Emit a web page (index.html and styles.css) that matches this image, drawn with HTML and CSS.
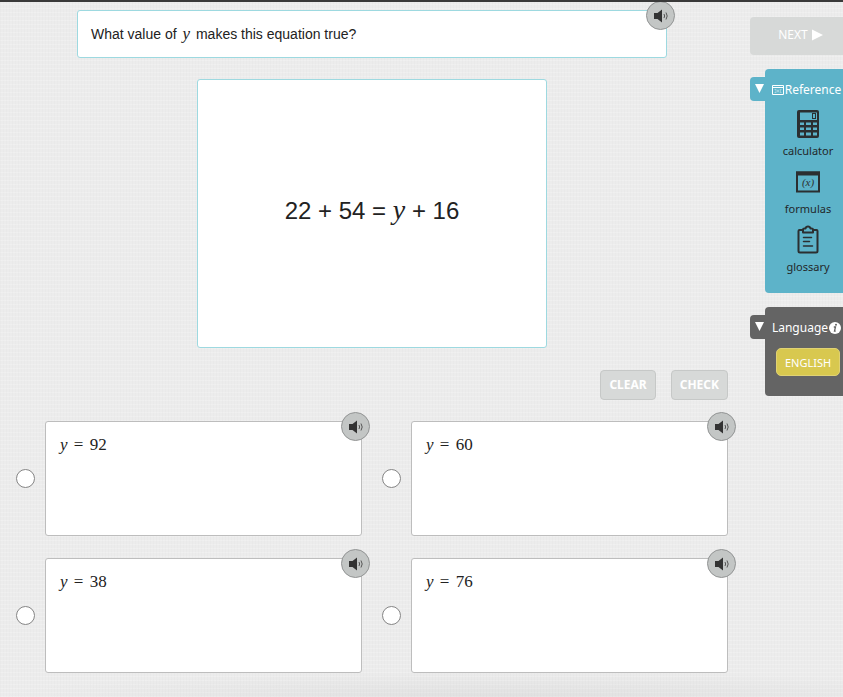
FILE: index.html
```html
<!DOCTYPE html>
<html lang="en">
<head>
  <meta charset="UTF-8" />
  <meta name="viewport" content="width=device-width, initial-scale=1.0" />
  <title>Equations</title>
  <link rel="stylesheet" href="styles.css">
</head>
<body>

  <!-- shared speaker icon -->
  <svg class="defs" aria-hidden="true">
    <symbol id="speaker" viewBox="0 0 16 14">
      <path d="M1 4h3.500L9 .5v13L4.500 10H1z" fill="#333"/>
      <path d="M11 5q1.300 2 0 4M13 3.500q2.400 3.500 0 7" fill="none" stroke="#555" stroke-width="1"/>
    </symbol>
  </svg>

  <div class="page">
    <main class="main">
      <div class="question">
        What value of <i class="var">y</i> makes this equation true?
        <button class="speaker" aria-label="Listen"><svg><use href="#speaker"/></svg></button>
      </div>

      <div class="figure">
        <p class="equation">22 + 54 = <i class="var">y</i> + 16</p>
      </div>

      <div class="actions">
        <button class="action">CLEAR</button>
        <button class="action">CHECK</button>
      </div>

      <form class="choices">
        <div class="choice">
          <input type="radio" name="answer" id="a1" />
          <div class="card">
            <label for="a1"><i>y</i> <span class="eq">=</span> 92</label>
            <button type="button" class="speaker" aria-label="Listen"><svg><use href="#speaker"/></svg></button>
          </div>
        </div>
        <div class="choice">
          <input type="radio" name="answer" id="a2" />
          <div class="card">
            <label for="a2"><i>y</i> <span class="eq">=</span> 60</label>
            <button type="button" class="speaker" aria-label="Listen"><svg><use href="#speaker"/></svg></button>
          </div>
        </div>
        <div class="choice">
          <input type="radio" name="answer" id="a3" />
          <div class="card">
            <label for="a3"><i>y</i> <span class="eq">=</span> 38</label>
            <button type="button" class="speaker" aria-label="Listen"><svg><use href="#speaker"/></svg></button>
          </div>
        </div>
        <div class="choice">
          <input type="radio" name="answer" id="a4" />
          <div class="card">
            <label for="a4"><i>y</i> <span class="eq">=</span> 76</label>
            <button type="button" class="speaker" aria-label="Listen"><svg><use href="#speaker"/></svg></button>
          </div>
        </div>
      </form>
    </main>

    <aside class="sidebar">
      <button class="next">NEXT
        <svg width="11" height="12" viewBox="0 0 11 12"><path d="M0 0.500l11 5.500-11 5.500z" fill="#fff"/></svg>
      </button>

      <section class="panel reference">
        <button class="tab" aria-label="Collapse reference">
          <svg width="9" height="10" viewBox="0 0 9 10"><path d="M0 0h9L4.500 9z" fill="#fff"/></svg>
        </button>
        <h2>
          <svg width="12" height="10" viewBox="0 0 12 10"><path d="M.5.5h11v9H.5zM.5 2.500h11" fill="none" stroke="#fff"/><path d="M2.500 4.500h1.500v3H2.500M5 4.500l2 3M7 4.500l-2 3M9.500 4.500H8.300v3h1.200" fill="none" stroke="#cdeaf0" stroke-width=".6"/></svg>Reference
        </h2>
        <a href="#" class="tool">
          <svg width="24" height="30" viewBox="0 0 24 30">
            <rect x="1" y="1" width="22" height="28" rx="2" fill="#2b2f31"/>
            <path d="M4 3.500h17v7.500H4z" fill="#5db3c9"/>
            <rect x="16.500" y="4.500" width="3" height="5" fill="none" stroke="#2b2f31"/>
            <path d="M4 13.500h4v2.500H4zM10 13.500h5v2.500h-5zM17 13.500h4v2.500h-4zM4 18.500h4v2.500H4zM10 18.500h5v2.500h-5zM17 18.500h4v2.500h-4zM4 23.500h4v3H4zM10 23.500h5v3h-5zM17 23.500h4v3h-4z" fill="#5db3c9"/>
          </svg>
          calculator
        </a>
        <a href="#" class="tool">
          <svg width="24" height="30" viewBox="0 0 24 30">
            <path d="M1 5.500h22v19H1z" fill="none" stroke="#2b2f31" stroke-width="2"/>
            <path d="M0 4.500h24v4H0z" fill="#2b2f31"/>
            <text x="12" y="19" text-anchor="middle" class="fx">(x)</text>
          </svg>
          formulas
        </a>
        <a href="#" class="tool">
          <svg width="24" height="30" viewBox="0 0 24 30" fill="none" stroke="#2b2f31" stroke-width="2" stroke-linecap="round" stroke-linejoin="round">
            <path d="M7 5H3.500Q2.500 5 2.500 6v20q0 1.500 1.500 1.500h16q1.500 0 1.500-1.500V6q0-1-1-1H17"/>
            <path d="M7 7.500V4.500Q7 3.500 8.500 3.500h1Q10 1.500 12 1.500t2.500 2h1q1.500 0 1.500 1v3z"/>
            <path d="M7.500 12.500h8M7.500 16.500h6M7.500 21h9" stroke-width="1.500"/>
          </svg>
          glossary
        </a>
      </section>

      <section class="panel language">
        <button class="tab" aria-label="Collapse language">
          <svg width="9" height="10" viewBox="0 0 9 10"><path d="M0 0h9L4.500 9z" fill="#fff"/></svg>
        </button>
        <h2>Language
          <svg width="12" height="12" viewBox="0 0 12 12"><circle cx="6" cy="6" r="6" fill="#fff"/><circle cx="7" cy="2.800" r="1" fill="#646464"/><path d="M4.800 5h1.700L5.500 9.200h1.200" fill="none" stroke="#646464" stroke-width="1.300"/></svg>
        </h2>
        <button class="lang">ENGLISH</button>
      </section>
    </aside>
  </div>

</body>
</html>
```

FILE: styles.css
```css
* {
  box-sizing: border-box;
}
body {
  margin: 0;
  min-height: 100vh;
  border-top: 2px solid #3a3a3a;
  font-family: "Liberation Sans", Arial, sans-serif;
  color: #222;
  background:
    radial-gradient(ellipse 520px 26px at 60% 100%, rgba(0,0,0,0.05), transparent),
    repeating-linear-gradient(90deg, rgba(0,0,0,0.012) 0 1px, transparent 1px 3px),
    repeating-linear-gradient(0deg, rgba(255,255,255,0.2) 0 1px, transparent 1px 4px),
    #ececec;
  overflow-x: hidden;
}
button {
  font-family: "Noto Sans", sans-serif;
  padding: 0;
  cursor: pointer;
}
.defs {
  position: absolute;
  width: 0;
  height: 0;
}
.page {
  display: flex;
}
.main {
  flex: 1;
  min-width: 0;
  padding: 8px 22px 24px 16px;
}

/* question + figure */
.question {
  position: relative;
  margin: 0 61px 21px;
  padding: 12px 13px;
  border: 1px solid #9dd9e0;
  border-radius: 3px;
  background: #fff;
  font-size: 14px;
  line-height: 22px;
}
.var {
  font-family: "Liberation Serif", "Times New Roman", serif;
}
.question .var {
  margin: 0 2px;
  font-size: 17px;
  line-height: 16px;
}
.figure {
  display: flex;
  align-items: center;
  justify-content: center;
  width: 350px;
  height: 269px;
  margin: 0 auto 22px;
  padding-bottom: 5px;
  border: 1px solid #9dd9e0;
  border-radius: 3px;
  background: #fff;
}
.equation {
  margin: 0;
  font-size: 24px;
  line-height: 28px;
}
.equation .var {
  font-size: 28px;
  line-height: 24px;
}
.speaker {
  position: absolute;
  top: -10px;
  right: -9px;
  display: flex;
  align-items: center;
  justify-content: center;
  width: 29px;
  height: 29px;
  border: 1px solid #929494;
  border-radius: 50%;
  background: #c3c6c5;
}
.speaker svg {
  width: 16px;
  height: 14px;
}

.actions {
  display: flex;
  justify-content: flex-end;
  gap: 15px;
  margin-bottom: 21px;
}
.action {
  height: 30px;
  padding: 0 8px 2px;
  border: 1px solid #c6c8c7;
  border-radius: 4px;
  background: #d7d9d8;
  color: #fff;
  font-size: 12px;
  font-weight: bold;
}

/* answers */
.choices {
  display: grid;
  grid-template-columns: 1fr 1fr;
  gap: 22px 20px;
}
.choice {
  display: flex;
  align-items: center;
  gap: 10px;
}
.choice input {
  appearance: none;
  width: 19px;
  height: 19px;
  margin: 0;
  border: 1px solid #858585;
  border-radius: 50%;
  background: #fff;
}
.choice input:checked {
  background: #5db3c9;
}
.card {
  position: relative;
  flex: 1;
  height: 115px;
  padding: 12px 14px;
  border: 1px solid #bdbdbd;
  border-radius: 3px;
  background: #fff;
}
.card label {
  display: block;
  font-family: "Liberation Serif", "Times New Roman", serif;
  font-size: 17px;
  line-height: 22px;
}
.eq {
  margin: 0 2px;
}

/* right side */
.sidebar {
  width: 93px;
  padding-top: 15px;
  font-family: "Noto Sans", sans-serif;
}
.next {
  display: flex;
  align-items: center;
  justify-content: center;
  gap: 4px;
  width: 100%;
  height: 38px;
  padding: 0 0 3px 8px;
  margin-bottom: 14px;
  border: none;
  border-radius: 4px 0 0 4px;
  background: #d7d9d8;
  color: #fff;
  font-size: 12px;
}
.panel {
  position: relative;
  display: flex;
  flex-direction: column;
  align-items: center;
  margin: 0 0 14px 15px;
  padding: 12px 0 16px 8px;
  border-radius: 4px 0 0 4px;
}
.panel h2 {
  display: flex;
  align-items: center;
  gap: 1px;
  margin: 0 3px 10px 0;
  color: #fff;
  font-size: 12px;
  font-weight: normal;
  line-height: 18px;
}
.panel h2 svg {
  flex: none;
}
.tab {
  position: absolute;
  top: 8px;
  left: -15px;
  display: flex;
  align-items: center;
  justify-content: center;
  width: 18px;
  height: 24px;
  border: none;
  border-radius: 4px 0 0 4px;
  background: inherit;
}
.reference {
  background: #5db3c9;
}
.language {
  padding-bottom: 20px;
  background: #646464;
}
.language h2 {
  margin-bottom: 11px;
}
.tool {
  display: flex;
  flex-direction: column;
  align-items: center;
  gap: 3px;
  margin-bottom: 7px;
  color: #23282a;
  font-size: 11px;
  line-height: 18px;
  text-decoration: none;
}
.tool:last-child {
  margin-bottom: 1px;
}
.fx {
  font-family: "Liberation Serif", serif;
  font-size: 11px;
  font-style: italic;
  fill: #2b2f31;
}
.lang {
  height: 28px;
  padding: 0 8px;
  border: 1px solid #e0d274;
  border-radius: 5px;
  background: #d8c84f;
  color: #fff;
  font-size: 11px;
}
```
